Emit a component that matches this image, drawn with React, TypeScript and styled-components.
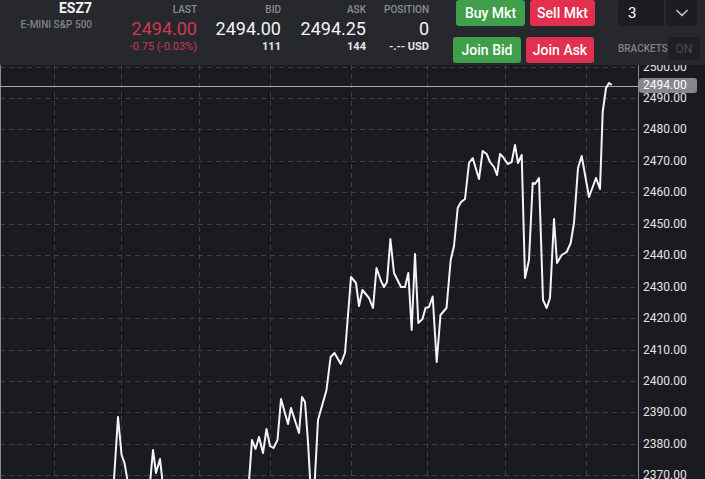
import React from 'react';
import styled, { createGlobalStyle } from 'styled-components';
import { ChevronDown } from 'lucide-react';

const GlobalStyle = createGlobalStyle`
  html, body {
    margin: 0;
    padding: 0;
    background: #1a1b21;
  }
  body {
    font-family: Roboto, "Liberation Sans", Arial, sans-serif;
  }
`;

const Screen = styled.div`
  width: 705px;
  height: 479px;
  overflow: hidden;
  background: #1a1b21;
  display: flex;
  flex-direction: column;
`;

const Header = styled.header`
  height: 65px;
  flex: none;
  background: #26282e;
  display: flex;
  align-items: flex-start;
`;

const Quote = styled.div<{ $width: number }>`
  width: ${p => p.$width}px;
  flex: none;
  display: flex;
  flex-direction: column;
  align-items: flex-end;
  white-space: nowrap;
`;

const Symbol = styled.div`
  font-size: 14px;
  font-weight: 700;
  line-height: 16px;
  color: #f2f2f2;
`;

const Description = styled.div`
  margin-top: 3px;
  font-size: 10px;
  font-weight: 500;
  line-height: 12px;
  color: #80838a;
`;

const Label = styled.div`
  margin-top: 4px;
  font-size: 10px;
  font-weight: 500;
  line-height: 12px;
  color: #8a8d93;
`;

const Price = styled.div<{ $color?: string }>`
  margin-top: 3px;
  font-size: 18px;
  line-height: 20px;
  color: ${p => p.$color || '#f4f4f4'};
`;

const SubValue = styled.div<{ $color?: string; $bold?: boolean }>`
  margin-top: 1px;
  font-size: 11px;
  font-weight: ${p => (p.$bold ? 700 : 400)};
  line-height: 13px;
  color: ${p => p.$color || '#e6e6e6'};
`;

const Actions = styled.div`
  margin-left: 24px;
  display: flex;
  flex-direction: column;
  gap: 11px;
`;

const ButtonRow = styled.div<{ $indent?: number }>`
  display: flex;
  gap: 5px;
  margin-left: ${p => p.$indent || 0}px;
`;

const OrderButton = styled.button<{ $side: 'buy' | 'sell'; $width: number }>`
  width: ${p => p.$width}px;
  height: 26px;
  padding: 0;
  border: none;
  border-radius: 3px;
  background: ${p => (p.$side === 'buy' ? '#3f9f4a' : '#e3304e')};
  color: #ffffff;
  font-family: inherit;
  font-size: 14px;
  font-weight: 500;
  cursor: pointer;
`;

const Settings = styled.div`
  margin-left: 23px;
  flex: 1;
  display: flex;
  flex-direction: column;
  gap: 11px;
`;

const Select = styled.div`
  display: flex;
  gap: 2px;
  height: 26px;
`;

const SelectValue = styled.div`
  width: 36px;
  padding-left: 10px;
  background: #1c1d22;
  border-radius: 3px 0 0 3px;
  color: #ffffff;
  font-size: 15px;
  display: flex;
  align-items: center;
`;

const SelectToggle = styled.div`
  width: 31px;
  background: #1c1d22;
  border-radius: 0 3px 3px 0;
  display: flex;
  align-items: center;
  justify-content: center;
  color: #c4c4c4;
`;

const ToggleRow = styled.div`
  display: flex;
  align-items: center;
  height: 23px;
`;

const ToggleLabel = styled.div`
  width: 50px;
  font-size: 10px;
  font-weight: 500;
  color: #7f8288;
`;

const ToggleButton = styled.div`
  width: 32px;
  height: 23px;
  background: #1e1f24;
  border-radius: 3px 0 0 3px;
  color: #4c4e54;
  font-size: 12px;
  display: flex;
  align-items: center;
  justify-content: center;
`;

const Chart = styled.div`
  position: relative;
  flex: 1;
  overflow: hidden;
`;

const Plot = styled.svg`
  position: absolute;
  left: 0;
  top: 0;
  display: block;
`;

const AxisLabel = styled.div`
  position: absolute;
  left: 643px;
  font-size: 12px;
  line-height: 14px;
  color: #e4e4e4;
`;

const PriceTag = styled.div`
  position: absolute;
  left: 639px;
  width: 54px;
  height: 15px;
  padding-left: 4px;
  border-radius: 3px;
  background: #85878d;
  color: #ffffff;
  font-size: 12px;
  line-height: 15px;
`;

const TOP = 65;
const priceY = (p: number) => 66.5 + (2500 - p) * 3.145;

const levels = Array.from({ length: 14 }, (_, i) => 2500 - i * 10);
const columns = [54, 121, 199, 270, 351, 427, 505, 586];

const series: [number, number][] = [
  [113, 495], [118, 417], [121.6, 455], [124.5, 463], [130, 495],
  [149, 495], [153, 450], [156, 473], [160, 459], [164, 495],
  [248, 495], [252, 440], [255.5, 449], [259, 437], [263, 453], [266.5, 429],
  [270, 446], [273.5, 448], [277.5, 440], [281, 399], [288, 424], [291, 408],
  [299, 433], [302, 397], [305, 402], [308, 442], [311, 495], [314, 495],
  [318, 420], [326.5, 390], [330.6, 357], [334.5, 353], [340.8, 364], [345, 353],
  [351, 277], [356, 283], [359, 306], [362.4, 290], [369, 298], [373, 308],
  [376.5, 268], [381, 281], [384, 287], [387, 282], [390.4, 239], [394, 273],
  [401, 287], [405, 287], [408.3, 273], [411.7, 330], [415, 254], [418.3, 323],
  [422.5, 319], [425.5, 308], [429, 307], [432.7, 296.5], [436.7, 362], [440.5, 315],
  [446.5, 308], [450.7, 260], [454, 246], [457.7, 208], [461, 202], [465, 199],
  [469, 163], [472.7, 158], [479, 179], [482.7, 151], [486.7, 154], [490, 162],
  [494, 167], [497, 175], [500, 154], [503, 157], [507.7, 164], [511.7, 162],
  [515, 145], [518, 163], [521.7, 155], [525, 278], [529, 260], [532.7, 183],
  [535, 184], [539, 178], [543, 300], [546.7, 308], [550, 298], [554, 219],
  [557, 263], [561.7, 255], [566.7, 252], [570.7, 243], [574, 223], [578, 168],
  [581.7, 156], [589, 197], [596, 178], [600, 189], [602.7, 112], [606, 88],
  [609, 83], [611.7, 85],
];

const quotes = [
  { key: 'last', width: 105, label: 'LAST', value: '2494.00', color: '#d0384e', sub: '-0.75 (-0.03%)', subColor: '#c93a4f', bold: false },
  { key: 'bid', width: 84, label: 'BID', value: '2494.00', sub: '111', bold: true },
  { key: 'ask', width: 85, label: 'ASK', value: '2494.25', sub: '144', bold: true },
  { key: 'pos', width: 63, label: 'POSITION', value: '0', sub: '-.-- USD', bold: true },
];

export default function App() {
  const last = 2494;
  return (
    <>
      <GlobalStyle />
      <Screen>
        <Header>
          <Quote $width={92}>
            <Symbol>ESZ7</Symbol>
            <Description>E-MINI S&amp;P 500</Description>
          </Quote>
          {quotes.map(q => (
            <Quote key={q.key} $width={q.width}>
              <Label>{q.label}</Label>
              <Price $color={q.color}>{q.value}</Price>
              <SubValue $color={q.subColor} $bold={q.bold}>{q.sub}</SubValue>
            </Quote>
          ))}
          <Actions>
            <ButtonRow $indent={3}>
              <OrderButton $side="buy" $width={69}>Buy Mkt</OrderButton>
              <OrderButton $side="sell" $width={65}>Sell Mkt</OrderButton>
            </ButtonRow>
            <ButtonRow>
              <OrderButton $side="buy" $width={68}>Join Bid</OrderButton>
              <OrderButton $side="sell" $width={68}>Join Ask</OrderButton>
            </ButtonRow>
          </Actions>
          <Settings>
            <Select>
              <SelectValue>3</SelectValue>
              <SelectToggle>
                <ChevronDown size={20} strokeWidth={2} />
              </SelectToggle>
            </Select>
            <ToggleRow>
              <ToggleLabel>BRACKETS</ToggleLabel>
              <ToggleButton>ON</ToggleButton>
            </ToggleRow>
          </Settings>
        </Header>
        <Chart>
          <Plot width={705} height={479 - TOP} viewBox={`0 ${TOP} 705 ${479 - TOP}`}>
            {levels.map(p => (
              <line key={p} x1={0} x2={638} y1={Math.round(priceY(p)) + 0.5} y2={Math.round(priceY(p)) + 0.5}
                stroke="#3d4046" strokeDasharray="5 4" />
            ))}
            {columns.map(x => (
              <line key={x} x1={x + 0.5} x2={x + 0.5} y1={TOP} y2={479} stroke="#3d4046" strokeDasharray="5 4" />
            ))}
            <line x1={0.5} x2={0.5} y1={TOP} y2={479} stroke="#8a8a8e" />
            <line x1={638.5} x2={638.5} y1={TOP} y2={479} stroke="#8a8a8e" />
            <line x1={0} x2={638} y1={86.5} y2={86.5} stroke="#a9a9ad" />
            <polyline points={series.map(([x, y]) => `${x},${y}`).join(' ')} fill="none"
              stroke="#f4f4f4" strokeWidth={2} strokeLinejoin="round" />
          </Plot>
          {levels.map(p => (
            <AxisLabel key={p} style={{ top: priceY(p) - 7 - TOP }}>{p.toFixed(2)}</AxisLabel>
          ))}
          <PriceTag style={{ top: priceY(last) - 7.5 - TOP }}>{last.toFixed(2)}</PriceTag>
        </Chart>
      </Screen>
    </>
  );
}
